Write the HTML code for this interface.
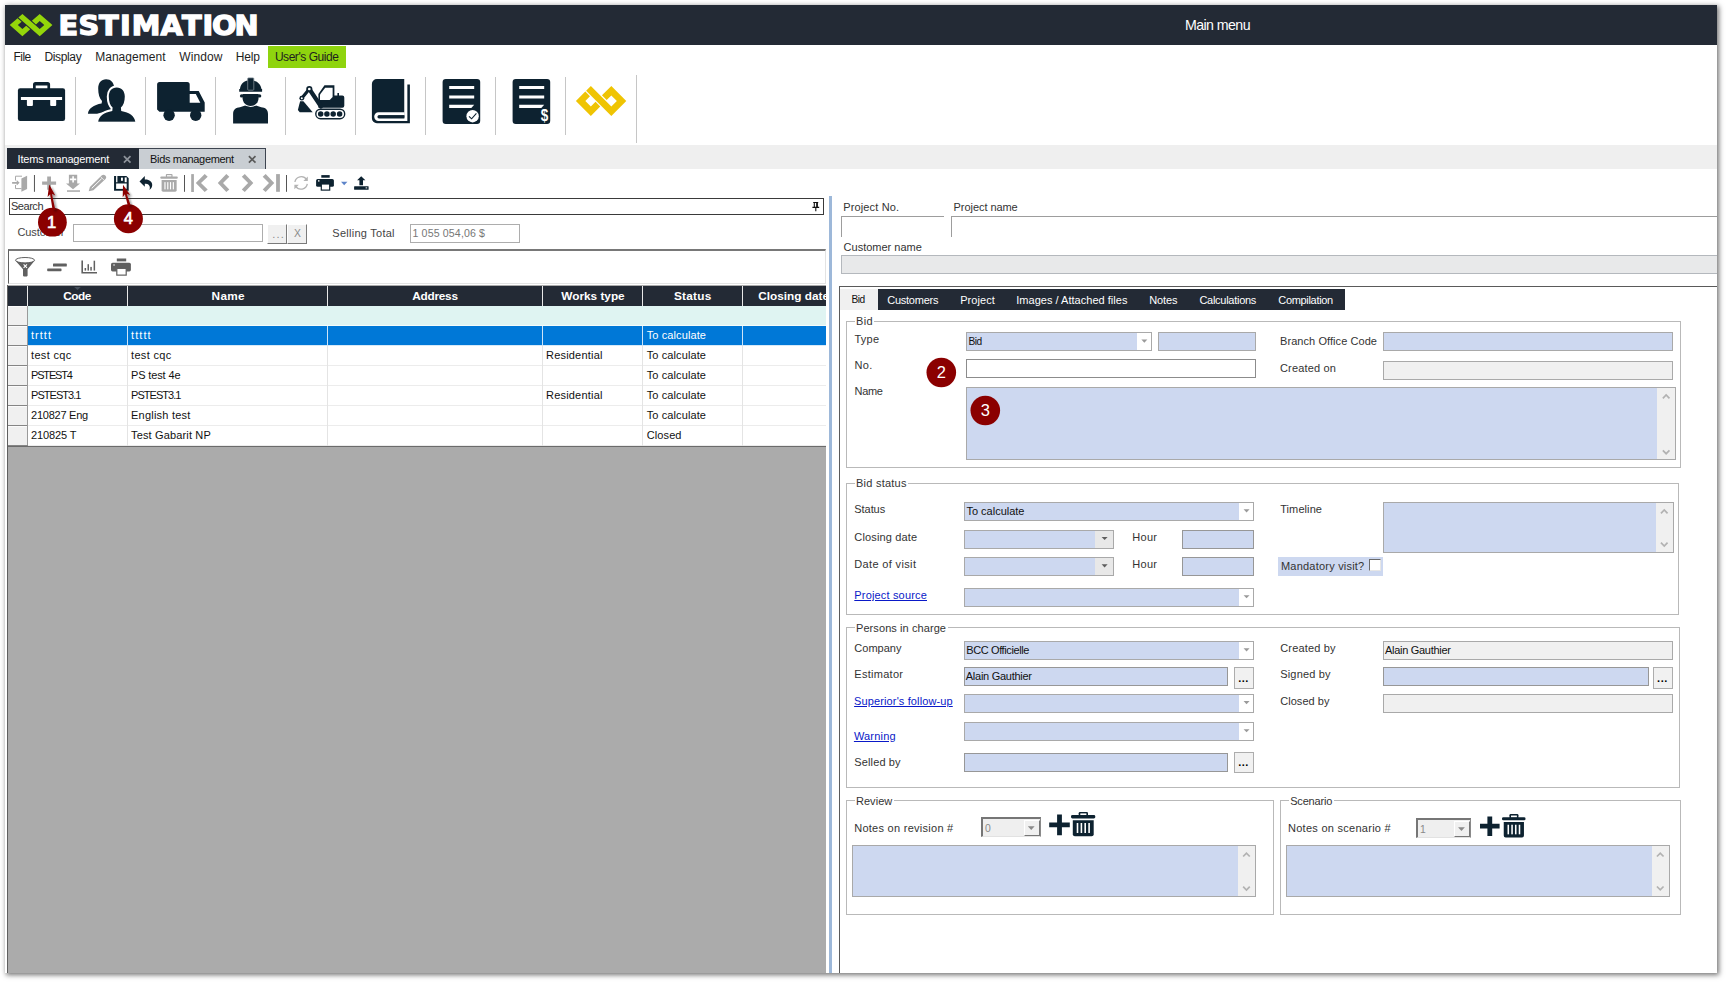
<!DOCTYPE html>
<html lang="en"><head><meta charset="utf-8"><title>Estimation - Bids management</title>
<style>
html,body{margin:0;padding:0;}
body{width:1726px;height:982px;position:relative;overflow:hidden;background:#fff;font-family:"Liberation Sans",sans-serif;}
div{position:absolute;box-sizing:border-box;}
.t{position:absolute;white-space:pre;line-height:1;}
svg{position:absolute;left:0;top:0;}
</style></head><body>
<div style="left:5px;top:5px;width:1712px;height:968px;background:#fff;box-shadow:1.5px 1.5px 5px 0.5px rgba(0,0,0,0.55);"></div>
<div style="left:5px;top:5px;width:1712px;height:40px;background:#232a35;"></div>
<span class="t" style="left:1185px;top:18.28px;font-size:14.2px;color:#fff;letter-spacing:-0.58px;">Main menu</span>
<span class="t" style="left:13.6px;top:50.74px;font-size:12px;color:#1e1e1e;letter-spacing:-0.58px;">File</span>
<span class="t" style="left:44.4px;top:50.74px;font-size:12px;color:#1e1e1e;letter-spacing:-0.34px;">Display</span>
<span class="t" style="left:95.2px;top:50.74px;font-size:12px;color:#1e1e1e;letter-spacing:0.03px;">Management</span>
<span class="t" style="left:179.3px;top:50.74px;font-size:12px;color:#1e1e1e;letter-spacing:0.1px;">Window</span>
<span class="t" style="left:235.7px;top:50.74px;font-size:12px;color:#1e1e1e;letter-spacing:-0.13px;">Help</span>
<div style="left:267.5px;top:46px;width:78.5px;height:22px;background:#8fd40e;"></div>
<span class="t" style="left:274.9px;top:50.74px;font-size:12px;color:#1e1e1e;letter-spacing:-0.46px;">User's Guide</span>
<div style="left:75px;top:77px;width:1px;height:57.5px;background:#c6c6c6;"></div>
<div style="left:144.8px;top:77px;width:1px;height:57.5px;background:#c6c6c6;"></div>
<div style="left:214.7px;top:77px;width:1px;height:57.5px;background:#c6c6c6;"></div>
<div style="left:285px;top:77px;width:1px;height:57.5px;background:#c6c6c6;"></div>
<div style="left:354.8px;top:77px;width:1px;height:57.5px;background:#c6c6c6;"></div>
<div style="left:424.7px;top:77px;width:1px;height:57.5px;background:#c6c6c6;"></div>
<div style="left:494.5px;top:77px;width:1px;height:57.5px;background:#c6c6c6;"></div>
<div style="left:565px;top:77px;width:1px;height:57.5px;background:#c6c6c6;"></div>
<div style="left:636px;top:75px;width:1px;height:67.7px;background:#c6c6c6;"></div>
<div style="left:5px;top:145px;width:1712px;height:24px;background:#efefef;"></div>
<div style="left:7px;top:147.5px;width:132px;height:21.5px;background:#232a35;"></div>
<div style="left:139px;top:147.5px;width:126.5px;height:21.5px;background:#c9ced3;border:1px solid #3d4450;border-bottom:none;border-left:none;"></div>
<span class="t" style="left:17.5px;top:153.89px;font-size:11px;color:#fff;letter-spacing:-0.16px;">Items management</span>
<span class="t" style="left:150px;top:153.89px;font-size:11px;color:#111;letter-spacing:-0.32px;">Bids management</span>
<div style="left:9px;top:198px;width:815px;height:16.5px;background:#fff;border:1px solid #3a3a3a;"></div>
<span class="t" style="left:11px;top:200.99px;font-size:11px;color:#333;letter-spacing:-0.47px;">Search</span>
<span class="t" style="left:17.5px;top:226.99px;font-size:11px;color:#444;letter-spacing:-0.1px;">Customer</span>
<div style="left:73px;top:224.3px;width:190px;height:18.2px;background:#fff;border:1px solid #adadad;"></div>
<div style="left:267.4px;top:224.3px;width:19.2px;height:19.3px;background:#f0f0f0;border-top:1px solid #fff;border-left:1px solid #fff;border-right:1.5px solid #7a7a7a;border-bottom:1.5px solid #7a7a7a;"></div>
<div style="left:287px;top:224.3px;width:19.8px;height:19.3px;background:#f0f0f0;border-top:1px solid #fff;border-left:1px solid #fff;border-right:1.5px solid #7a7a7a;border-bottom:1.5px solid #7a7a7a;"></div>
<span class="t" style="left:272.3px;top:229.09px;font-size:11px;color:#8a8a8a;letter-spacing:1.2px;">...</span>
<span class="t" style="left:293.9px;top:229.2px;font-size:10.4px;color:#8a8a8a;">X</span>
<span class="t" style="left:332.3px;top:227.99px;font-size:11px;color:#444;letter-spacing:0.26px;">Selling Total</span>
<div style="left:410px;top:224.3px;width:109.7px;height:18.7px;background:#fff;border:1px solid #adadad;"></div>
<span class="t" style="left:412.5px;top:228.23px;font-size:10.6px;color:#777;letter-spacing:0.14px;">1 055 054,06 $</span>
<div style="left:8px;top:249px;width:818px;height:35px;background:#fff;border-top:2px solid #787878;border-left:1px solid #5f5f5f;border-right:1px solid #e3e3e3;border-bottom:1px solid #e3e3e3;"></div>
<div style="left:7px;top:285px;width:819px;height:688px;background:#ababab;border-left:1px solid #5f5f5f;"></div>
<div style="left:8px;top:285.5px;width:818px;height:20.2px;background:#232a35;"></div>
<div style="left:27px;top:285.5px;width:1px;height:20.2px;background:#e8e8e8;"></div>
<div style="left:127px;top:285.5px;width:1px;height:20.2px;background:#e8e8e8;"></div>
<div style="left:327px;top:285.5px;width:1px;height:20.2px;background:#e8e8e8;"></div>
<div style="left:542px;top:285.5px;width:1px;height:20.2px;background:#e8e8e8;"></div>
<div style="left:642px;top:285.5px;width:1px;height:20.2px;background:#e8e8e8;"></div>
<div style="left:742px;top:285.5px;width:1px;height:20.2px;background:#e8e8e8;"></div>
<span class="t" style="left:63.2px;top:291.01px;font-size:11.8px;color:#fff;font-weight:bold;letter-spacing:-0.43px;">Code</span>
<span class="t" style="left:211.6px;top:291.01px;font-size:11.8px;color:#fff;font-weight:bold;letter-spacing:0.29px;">Name</span>
<span class="t" style="left:412.2px;top:291.01px;font-size:11.8px;color:#fff;font-weight:bold;letter-spacing:-0.24px;">Address</span>
<span class="t" style="left:561.3px;top:291.01px;font-size:11.8px;color:#fff;font-weight:bold;">Works type</span>
<span class="t" style="left:673.9px;top:291.01px;font-size:11.8px;color:#fff;font-weight:bold;letter-spacing:0.25px;">Status</span>
<span class="t" style="left:758.2px;top:291.01px;font-size:11.8px;color:#fff;font-weight:bold;">Closing date</span>
<div style="left:826px;top:285px;width:3px;height:25px;background:#fff;"></div>
<div style="left:8px;top:305.7px;width:818px;height:19.8px;background:#dff4f2;"></div>
<div style="left:27.5px;top:324.5px;width:798.5px;height:1px;background:#f4fbfa;"></div>
<div style="left:27.5px;top:325.5px;width:798.5px;height:20px;background:#0078d7;"></div>
<span class="t" style="left:31px;top:330.19px;font-size:11px;color:#fff;letter-spacing:1.03px;">trttt</span>
<span class="t" style="left:131px;top:330.19px;font-size:11px;color:#fff;letter-spacing:1.08px;">ttttt</span>
<span class="t" style="left:646.7px;top:330.19px;font-size:11px;color:#fff;letter-spacing:0.11px;">To calculate</span>
<div style="left:27.5px;top:344.5px;width:798.5px;height:1px;background:#d6e9f8;"></div>
<div style="left:27.5px;top:345.5px;width:798.5px;height:20px;background:#fff;"></div>
<span class="t" style="left:31px;top:350.19px;font-size:11px;color:#111;letter-spacing:0.33px;">test cqc</span>
<span class="t" style="left:131px;top:350.19px;font-size:11px;color:#111;letter-spacing:0.33px;">test cqc</span>
<span class="t" style="left:546px;top:350.19px;font-size:11px;color:#111;letter-spacing:0.2px;">Residential</span>
<span class="t" style="left:646.7px;top:350.19px;font-size:11px;color:#111;letter-spacing:0.11px;">To calculate</span>
<div style="left:27.5px;top:364.5px;width:798.5px;height:1px;background:#ececec;"></div>
<div style="left:27.5px;top:365.5px;width:798.5px;height:20px;background:#fff;"></div>
<span class="t" style="left:31px;top:370.19px;font-size:11px;color:#111;letter-spacing:-1.17px;">PSTEST4</span>
<span class="t" style="left:131px;top:370.19px;font-size:11px;color:#111;letter-spacing:-0.13px;">PS test 4e</span>
<span class="t" style="left:646.7px;top:370.19px;font-size:11px;color:#111;letter-spacing:0.11px;">To calculate</span>
<div style="left:27.5px;top:384.5px;width:798.5px;height:1px;background:#ececec;"></div>
<div style="left:27.5px;top:385.5px;width:798.5px;height:20px;background:#fff;"></div>
<span class="t" style="left:31px;top:390.19px;font-size:11px;color:#111;letter-spacing:-0.95px;">PSTEST3.1</span>
<span class="t" style="left:131px;top:390.19px;font-size:11px;color:#111;letter-spacing:-0.95px;">PSTEST3.1</span>
<span class="t" style="left:546px;top:390.19px;font-size:11px;color:#111;letter-spacing:0.2px;">Residential</span>
<span class="t" style="left:646.7px;top:390.19px;font-size:11px;color:#111;letter-spacing:0.11px;">To calculate</span>
<div style="left:27.5px;top:404.5px;width:798.5px;height:1px;background:#ececec;"></div>
<div style="left:27.5px;top:405.5px;width:798.5px;height:20px;background:#fff;"></div>
<span class="t" style="left:31px;top:410.19px;font-size:11px;color:#111;letter-spacing:-0.24px;">210827 Eng</span>
<span class="t" style="left:131px;top:410.19px;font-size:11px;color:#111;letter-spacing:0.23px;">English test</span>
<span class="t" style="left:646.7px;top:410.19px;font-size:11px;color:#111;letter-spacing:0.11px;">To calculate</span>
<div style="left:27.5px;top:424.5px;width:798.5px;height:1px;background:#ececec;"></div>
<div style="left:27.5px;top:425.5px;width:798.5px;height:20px;background:#fff;"></div>
<span class="t" style="left:31px;top:430.19px;font-size:11px;color:#111;letter-spacing:-0.11px;">210825 T</span>
<span class="t" style="left:131px;top:430.19px;font-size:11px;color:#111;letter-spacing:0.15px;">Test Gabarit NP</span>
<span class="t" style="left:646.7px;top:430.19px;font-size:11px;color:#111;letter-spacing:0.11px;">Closed</span>
<div style="left:27.5px;top:444.5px;width:798.5px;height:1px;background:#ececec;"></div>
<div style="left:8px;top:305.7px;width:19.5px;height:139.8px;background:#f0f0f0;"></div>
<div style="left:8px;top:305.5px;width:18.5px;height:1px;background:#fbfbfb;"></div>
<div style="left:8px;top:324.5px;width:19.5px;height:1px;background:#858585;"></div>
<div style="left:8px;top:325.5px;width:18.5px;height:1px;background:#fbfbfb;"></div>
<div style="left:8px;top:344.5px;width:19.5px;height:1px;background:#858585;"></div>
<div style="left:8px;top:345.5px;width:18.5px;height:1px;background:#fbfbfb;"></div>
<div style="left:8px;top:364.5px;width:19.5px;height:1px;background:#858585;"></div>
<div style="left:8px;top:365.5px;width:18.5px;height:1px;background:#fbfbfb;"></div>
<div style="left:8px;top:384.5px;width:19.5px;height:1px;background:#858585;"></div>
<div style="left:8px;top:385.5px;width:18.5px;height:1px;background:#fbfbfb;"></div>
<div style="left:8px;top:404.5px;width:19.5px;height:1px;background:#858585;"></div>
<div style="left:8px;top:405.5px;width:18.5px;height:1px;background:#fbfbfb;"></div>
<div style="left:8px;top:424.5px;width:19.5px;height:1px;background:#858585;"></div>
<div style="left:8px;top:425.5px;width:18.5px;height:1px;background:#fbfbfb;"></div>
<div style="left:8px;top:444.5px;width:19.5px;height:1px;background:#858585;"></div>
<div style="left:26.5px;top:305.7px;width:1px;height:139.8px;background:#9a9a9a;"></div>
<div style="left:127px;top:325.5px;width:1px;height:120px;background:#e4e4e4;"></div>
<div style="left:327px;top:325.5px;width:1px;height:120px;background:#e4e4e4;"></div>
<div style="left:542px;top:325.5px;width:1px;height:120px;background:#e4e4e4;"></div>
<div style="left:642px;top:325.5px;width:1px;height:120px;background:#e4e4e4;"></div>
<div style="left:742px;top:325.5px;width:1px;height:120px;background:#e4e4e4;"></div>
<div style="left:127px;top:325.5px;width:1px;height:20px;background:#cfe4f7;"></div>
<div style="left:327px;top:325.5px;width:1px;height:20px;background:#cfe4f7;"></div>
<div style="left:542px;top:325.5px;width:1px;height:20px;background:#cfe4f7;"></div>
<div style="left:642px;top:325.5px;width:1px;height:20px;background:#cfe4f7;"></div>
<div style="left:742px;top:325.5px;width:1px;height:20px;background:#cfe4f7;"></div>
<div style="left:8px;top:445.6px;width:818px;height:1.2px;background:#6b6b6b;"></div>
<div style="left:826px;top:196px;width:3px;height:777px;background:#fff;"></div>
<div style="left:829px;top:196px;width:3px;height:777px;background:#9db8d9;"></div>
<span class="t" style="left:843.2px;top:201.89px;font-size:11px;color:#333;letter-spacing:0.15px;">Project No.</span>
<span class="t" style="left:953.6px;top:201.89px;font-size:11px;color:#333;letter-spacing:-0.06px;">Project name</span>
<div style="left:841.3px;top:216.3px;width:102.7px;height:20.7px;border-top:1px solid #9d9d9d;border-left:1px solid #9d9d9d;"></div>
<div style="left:951.3px;top:216.3px;width:765.7px;height:20.7px;border-top:1px solid #9d9d9d;border-left:1px solid #9d9d9d;"></div>
<span class="t" style="left:843.6px;top:242.19px;font-size:11px;color:#333;">Customer name</span>
<div style="left:841.3px;top:255.4px;width:875.7px;height:18.6px;background:#e8e9ea;border:1px solid #b4b8bd;border-right:none;"></div>
<div style="left:839.3px;top:286px;width:877.7px;height:687px;border-top:1.2px solid #5a5a5a;border-left:1.2px solid #5a5a5a;"></div>
<div style="left:840.3px;top:289px;width:37.9px;height:20.7px;background:#f0f0f0;"></div>
<div style="left:878.2px;top:289px;width:466.6px;height:20.7px;background:#232a35;"></div>
<span class="t" style="left:851.6px;top:295.37px;font-size:10.2px;color:#111;letter-spacing:-0.57px;">Bid</span>
<span class="t" style="left:887.3px;top:294.69px;font-size:11px;color:#fff;letter-spacing:-0.26px;">Customers</span>
<span class="t" style="left:960.2px;top:294.69px;font-size:11px;color:#fff;letter-spacing:0.06px;">Project</span>
<span class="t" style="left:1016.3px;top:294.69px;font-size:11px;color:#fff;letter-spacing:0.02px;">Images / Attached files</span>
<span class="t" style="left:1149.2px;top:294.69px;font-size:11px;color:#fff;letter-spacing:-0.11px;">Notes</span>
<span class="t" style="left:1199.4px;top:294.69px;font-size:11px;color:#fff;letter-spacing:-0.27px;">Calculations</span>
<span class="t" style="left:1278.3px;top:294.69px;font-size:11px;color:#fff;letter-spacing:-0.32px;">Compilation</span>
<div style="left:846.3px;top:321.1px;width:834.4px;height:146.6px;border:1px solid #b9b9b9;"></div>
<div style="left:854.5px;top:315.1px;width:19.5px;height:13px;background:#fff;"></div>
<span class="t" style="left:856px;top:316.49px;font-size:11px;color:#333;letter-spacing:0.3px;">Bid</span>
<span class="t" style="left:854.5px;top:334.29px;font-size:11px;color:#333;letter-spacing:0.22px;">Type</span>
<div style="left:966px;top:332.3px;width:185.7px;height:18.9px;background:#cdd8f0;border:1px solid #a9a9a9;"></div>
<div style="left:1137.2px;top:333.3px;width:13.5px;height:16.9px;background:#fff;"></div>
<span class="t" style="left:968.4px;top:336.77px;font-size:10.2px;color:#111;letter-spacing:-0.52px;">Bid</span>
<div style="left:1158px;top:332.3px;width:97.9px;height:18.9px;background:#cdd8f0;border:1px solid #a9a9a9;"></div>
<span class="t" style="left:854.5px;top:359.99px;font-size:11px;color:#333;letter-spacing:0.34px;">No.</span>
<div style="left:966px;top:359.2px;width:289.9px;height:18.4px;background:#fff;border:1px solid #8c8c8c;"></div>
<span class="t" style="left:854.5px;top:385.99px;font-size:11px;color:#333;letter-spacing:-0.31px;">Name</span>
<div style="left:966px;top:387.2px;width:709.9px;height:73.3px;background:#cdd8f0;border:1px solid #a9a9a9;"></div>
<div style="left:1657.4px;top:388.2px;width:17.5px;height:71.3px;background:#f0f0f0;"></div>
<span class="t" style="left:1280px;top:335.69px;font-size:11px;color:#333;letter-spacing:0.07px;">Branch Office Code</span>
<div style="left:1383px;top:332.3px;width:290px;height:18.9px;background:#cdd8f0;border:1px solid #a9a9a9;"></div>
<span class="t" style="left:1280px;top:363.19px;font-size:11px;color:#333;letter-spacing:0.16px;">Created on</span>
<div style="left:1383px;top:361.2px;width:290px;height:18.5px;background:#f0f0f0;border:1px solid #a9a9a9;"></div>
<div style="left:846.3px;top:482.8px;width:832.6px;height:131.8px;border:1px solid #b9b9b9;"></div>
<div style="left:854.5px;top:476.8px;width:53.5px;height:13px;background:#fff;"></div>
<span class="t" style="left:856px;top:478.19px;font-size:11px;color:#333;letter-spacing:0.24px;">Bid status</span>
<span class="t" style="left:854.3px;top:503.69px;font-size:11px;color:#333;letter-spacing:-0.06px;">Status</span>
<div style="left:963.8px;top:502.2px;width:290.1px;height:18.6px;background:#cdd8f0;border:1px solid #a9a9a9;"></div>
<div style="left:1239.4px;top:503.2px;width:13.5px;height:16.6px;background:#fff;"></div>
<span class="t" style="left:966.4px;top:505.89px;font-size:11px;color:#111;">To calculate</span>
<span class="t" style="left:854.3px;top:531.69px;font-size:11px;color:#333;letter-spacing:0.16px;">Closing date</span>
<div style="left:963.8px;top:529.7px;width:150.4px;height:19px;background:#cdd8f0;border:1px solid #a9a9a9;"></div>
<div style="left:1095.2px;top:530.7px;width:18px;height:17px;background:#e8e8e8;"></div>
<span class="t" style="left:1132.2px;top:531.89px;font-size:11px;color:#333;letter-spacing:0.32px;">Hour</span>
<div style="left:1181.8px;top:529.7px;width:72.1px;height:19px;background:#cdd8f0;border:1px solid #979797;"></div>
<span class="t" style="left:854.3px;top:558.69px;font-size:11px;color:#333;letter-spacing:0.35px;">Date of visit</span>
<div style="left:963.8px;top:557px;width:150.4px;height:19px;background:#cdd8f0;border:1px solid #a9a9a9;"></div>
<div style="left:1095.2px;top:558px;width:18px;height:17px;background:#e8e8e8;"></div>
<span class="t" style="left:1132.2px;top:558.89px;font-size:11px;color:#333;letter-spacing:0.32px;">Hour</span>
<div style="left:1181.8px;top:557px;width:72.1px;height:19px;background:#cdd8f0;border:1px solid #979797;"></div>
<span class="t" style="left:854.3px;top:590.19px;font-size:11px;color:#0a19c8;letter-spacing:0.17px;text-decoration:underline;">Project source</span>
<div style="left:963.8px;top:588px;width:290.1px;height:18.9px;background:#cdd8f0;border:1px solid #a9a9a9;"></div>
<div style="left:1239.4px;top:589px;width:13.5px;height:16.9px;background:#fff;"></div>
<span class="t" style="left:1280.2px;top:503.69px;font-size:11px;color:#333;letter-spacing:0.09px;">Timeline</span>
<div style="left:1383px;top:502.2px;width:291px;height:50.6px;background:#cdd8f0;border:1px solid #a9a9a9;"></div>
<div style="left:1655.5px;top:503.2px;width:17.5px;height:48.6px;background:#f0f0f0;"></div>
<div style="left:1277.8px;top:556.7px;width:105.2px;height:19.2px;background:#cdd8f0;"></div>
<span class="t" style="left:1281px;top:560.69px;font-size:11px;color:#333;letter-spacing:0.21px;">Mandatory visit?</span>
<div style="left:1369.2px;top:559px;width:11.8px;height:11.9px;background:#fff;border-top:1.5px solid #6a6a6a;border-left:1.5px solid #6a6a6a;border-right:1px solid #e6e6e6;border-bottom:1px solid #e6e6e6;"></div>
<div style="left:846.3px;top:627.3px;width:833.6px;height:160.6px;border:1px solid #b9b9b9;"></div>
<div style="left:854.5px;top:621.3px;width:93px;height:13px;background:#fff;"></div>
<span class="t" style="left:856px;top:622.69px;font-size:11px;color:#333;letter-spacing:0.08px;">Persons in charge</span>
<span class="t" style="left:854.3px;top:642.99px;font-size:11px;color:#333;letter-spacing:0.02px;">Company</span>
<div style="left:963.8px;top:641px;width:290.1px;height:19px;background:#cdd8f0;border:1px solid #a9a9a9;"></div>
<div style="left:1239.4px;top:642px;width:13.5px;height:17px;background:#fff;"></div>
<span class="t" style="left:966.3px;top:644.69px;font-size:11px;color:#111;letter-spacing:-0.4px;">BCC Officielle</span>
<span class="t" style="left:854.3px;top:668.79px;font-size:11px;color:#333;letter-spacing:0.28px;">Estimator</span>
<div style="left:963.8px;top:667.2px;width:264.4px;height:18.6px;background:#cdd8f0;border:1px solid #979797;"></div>
<span class="t" style="left:965.8px;top:670.89px;font-size:11px;color:#111;letter-spacing:-0.27px;">Alain Gauthier</span>
<div style="left:1234px;top:667.2px;width:20px;height:21.7px;background:#f1f1f1;border:1px solid #adadad;"></div>
<span class="t" style="left:1238.2px;top:672.59px;font-size:11px;color:#000;font-weight:bold;letter-spacing:0.5px;">...</span>
<span class="t" style="left:854.1px;top:695.69px;font-size:11px;color:#0a19c8;letter-spacing:0.12px;text-decoration:underline;">Superior's follow-up</span>
<div style="left:963.8px;top:694px;width:290.1px;height:18.7px;background:#cdd8f0;border:1px solid #a9a9a9;"></div>
<div style="left:1239.4px;top:695px;width:13.5px;height:16.7px;background:#fff;"></div>
<span class="t" style="left:853.9px;top:730.59px;font-size:11px;color:#0a19c8;letter-spacing:0.19px;text-decoration:underline;">Warning</span>
<div style="left:963.8px;top:722px;width:290.1px;height:18.9px;background:#cdd8f0;border:1px solid #a9a9a9;"></div>
<div style="left:1239.4px;top:723px;width:13.5px;height:16.9px;background:#fff;"></div>
<span class="t" style="left:854.3px;top:757.29px;font-size:11px;color:#333;letter-spacing:0.13px;">Selled by</span>
<div style="left:963.8px;top:753.3px;width:264.4px;height:18.5px;background:#cdd8f0;border:1px solid #979797;"></div>
<div style="left:1234px;top:752.3px;width:20px;height:20.9px;background:#f1f1f1;border:1px solid #adadad;"></div>
<span class="t" style="left:1238.2px;top:756.89px;font-size:11px;color:#000;font-weight:bold;letter-spacing:0.5px;">...</span>
<span class="t" style="left:1280.2px;top:642.99px;font-size:11px;color:#333;letter-spacing:0.18px;">Created by</span>
<div style="left:1383px;top:641px;width:290.2px;height:19px;background:#f0f0f0;border:1px solid #a9a9a9;"></div>
<span class="t" style="left:1385px;top:644.69px;font-size:11px;color:#111;letter-spacing:-0.29px;">Alain Gauthier</span>
<span class="t" style="left:1280.2px;top:668.79px;font-size:11px;color:#333;letter-spacing:0.18px;">Signed by</span>
<div style="left:1383px;top:667.2px;width:266.2px;height:18.6px;background:#cdd8f0;border:1px solid #979797;"></div>
<div style="left:1653px;top:667.2px;width:19.8px;height:21.7px;background:#f1f1f1;border:1px solid #adadad;"></div>
<span class="t" style="left:1657.1px;top:672.59px;font-size:11px;color:#000;font-weight:bold;letter-spacing:0.5px;">...</span>
<span class="t" style="left:1280.2px;top:695.89px;font-size:11px;color:#333;letter-spacing:0.05px;">Closed by</span>
<div style="left:1383px;top:694px;width:290.2px;height:18.7px;background:#f0f0f0;border:1px solid #a9a9a9;"></div>
<div style="left:846.3px;top:800.4px;width:427.5px;height:114.5px;border:1px solid #b9b9b9;"></div>
<div style="left:854.5px;top:794.4px;width:39.2px;height:13px;background:#fff;"></div>
<span class="t" style="left:856px;top:795.79px;font-size:11px;color:#333;letter-spacing:0.03px;">Review</span>
<span class="t" style="left:854.2px;top:822.69px;font-size:11px;color:#333;letter-spacing:0.27px;">Notes on revision #</span>
<div style="left:981px;top:817.3px;width:59.5px;height:19.3px;background:#efefef;border-top:2px solid #767676;border-left:2px solid #767676;border-right:1px solid #8a8a8a;border-bottom:1px solid #e2e2e2;"></div>
<div style="left:1023.5px;top:819.8px;width:16px;height:16.3px;background:#f0f0f0;border-top:1px solid #fff;border-left:1px solid #fff;border-right:1px solid #777;border-bottom:1.6px solid #777;"></div>
<span class="t" style="left:985px;top:824px;font-size:10.4px;color:#8a8a8a;">0</span>
<div style="left:852.2px;top:845.3px;width:404px;height:51.5px;background:#cdd8f0;border:1px solid #a9a9a9;"></div>
<div style="left:1237.7px;top:846.3px;width:17.5px;height:49.5px;background:#f0f0f0;"></div>
<div style="left:1280.2px;top:800.4px;width:400.6px;height:114.4px;border:1px solid #b9b9b9;"></div>
<div style="left:1288.7px;top:794.4px;width:45.1px;height:13px;background:#fff;"></div>
<span class="t" style="left:1290.2px;top:795.79px;font-size:11px;color:#333;letter-spacing:-0.19px;">Scenario</span>
<span class="t" style="left:1288px;top:823.29px;font-size:11px;color:#333;letter-spacing:0.27px;">Notes on scenario #</span>
<div style="left:1416px;top:818.3px;width:54.7px;height:19.3px;background:#efefef;border-top:2px solid #767676;border-left:2px solid #767676;border-right:1px solid #8a8a8a;border-bottom:1px solid #e2e2e2;"></div>
<div style="left:1453.7px;top:820.8px;width:16px;height:16.3px;background:#f0f0f0;border-top:1px solid #fff;border-left:1px solid #fff;border-right:1px solid #777;border-bottom:1.6px solid #777;"></div>
<span class="t" style="left:1420px;top:825px;font-size:10.4px;color:#8a8a8a;">1</span>
<div style="left:1286.2px;top:845.3px;width:383.8px;height:51.4px;background:#cdd8f0;border:1px solid #a9a9a9;"></div>
<div style="left:1651.5px;top:846.3px;width:17.5px;height:49.4px;background:#f0f0f0;"></div>
<svg width="1726" height="982" viewBox="0 0 1726 982" font-family="Liberation Sans, sans-serif">
<path d="M9.72 25.1 L22.42 36.2 L30.24 29.36 L26.19 25.82 L22.42 29.12 L17.82 25.1 L21.59 21.8 L17.54 18.26 Z" fill="#94d60a"/>
<path d="M22.42 14 L18.37 17.54 L39.72 36.2 L52.42 25.1 L39.72 14 L31.89 20.84 L35.95 24.38 L39.72 21.08 L44.31 25.1 L39.72 29.12 Z" fill="#94d60a"/>
<text transform="scale(1.07 1)" x="54.78 73.29 92.57 112.07 123.09 150.12 170.14 189.36 198.07 219.22" y="34.9" font-size="26.89" font-weight="bold" fill="#fff" font-family="DejaVu Sans, Liberation Sans, sans-serif" stroke="#fff" stroke-width="1.3" stroke-linejoin="miter">ESTIMATION</text>
<path d="M123.9 156.1 L130.5 162.7 M130.5 156.1 L123.9 162.7" stroke="#8e939b" stroke-width="1.7" fill="none"/>
<path d="M248.9 156.1 L255.5 162.7 M255.5 156.1 L248.9 162.7" stroke="#5a5a5a" stroke-width="1.7" fill="none"/>
<path d="M813.2 202.5 H818.2 M814.3 202.5 V207.2 M817.3 202.5 V207.2 M812.4 207.4 H819.2 M815.8 207.4 V211.2" stroke="#111" stroke-width="1.1" fill="none"/>
<rect x="816.2" y="202.6" width="1.2" height="4.6" fill="#111"/>
<path d="M74.2 287 H80.8 L77.5 290 Z" fill="#46505c"/>
<path d="M1141.35 339.45 H1147.35 L1144.35 342.65 Z" fill="#9a9a9a"/>
<path d="M1662.85 398.4 L1666.15 395 L1669.45 398.4" fill="none" stroke="#b2b2b2" stroke-width="1.7"/>
<path d="M1662.85 450.3 L1666.15 453.7 L1669.45 450.3" fill="none" stroke="#b2b2b2" stroke-width="1.7"/>
<path d="M1243.55 509.2 H1249.55 L1246.55 512.4 Z" fill="#9a9a9a"/>
<path d="M1101.6 536.9 H1107.6 L1104.6 540.1 Z" fill="#5e5e5e"/>
<path d="M1101.6 564.2 H1107.6 L1104.6 567.4 Z" fill="#5e5e5e"/>
<path d="M1243.55 595.15 H1249.55 L1246.55 598.35 Z" fill="#9a9a9a"/>
<path d="M1660.95 513.4 L1664.25 510 L1667.55 513.4" fill="none" stroke="#b2b2b2" stroke-width="1.7"/>
<path d="M1660.95 542.6 L1664.25 546 L1667.55 542.6" fill="none" stroke="#b2b2b2" stroke-width="1.7"/>
<path d="M1243.55 648.2 H1249.55 L1246.55 651.4 Z" fill="#9a9a9a"/>
<path d="M1243.55 701.05 H1249.55 L1246.55 704.25 Z" fill="#9a9a9a"/>
<path d="M1243.55 729.15 H1249.55 L1246.55 732.35 Z" fill="#9a9a9a"/>
<path d="M1027.85 826.15 H1034.65 L1031.25 830.05 Z" fill="#8a8a8a"/>
<path d="M1057.1 814.6 H1061.9 V822.5 H1069.8 V827.3 H1061.9 V835.2 H1057.1 V827.3 H1049.2 V822.5 H1057.1 Z" fill="#0d2230"/>
<rect x="1078.7" y="811.9" width="9.3" height="4.5" rx="1.3" fill="#0d2230"/>
<rect x="1080.3" y="813.4" width="6.1" height="2.2" fill="#fff"/>
<rect x="1071" y="815.1" width="24.3" height="3.3" rx="1.4" fill="#0d2230"/>
<path d="M1072.8 820.2 H1093.7 V834.2 a2 2 0 0 1 -2 2 H1074.8 a2 2 0 0 1 -2 -2 Z" fill="#0d2230"/>
<rect x="1076.7" y="823" width="1.6" height="10" fill="#fff"/>
<rect x="1080.6" y="823" width="1.6" height="10" fill="#fff"/>
<rect x="1084.4" y="823" width="1.6" height="10" fill="#fff"/>
<rect x="1088.3" y="823" width="1.6" height="10" fill="#fff"/>
<path d="M1243.15 856.5 L1246.45 853.1 L1249.75 856.5" fill="none" stroke="#b2b2b2" stroke-width="1.7"/>
<path d="M1243.15 886.6 L1246.45 890 L1249.75 886.6" fill="none" stroke="#b2b2b2" stroke-width="1.7"/>
<path d="M1458.05 827.15 H1464.85 L1461.45 831.05 Z" fill="#8a8a8a"/>
<path d="M1487.4 816.4 H1492.2 V823.75 H1499.6 V828.55 H1492.2 V835.9 H1487.4 V828.55 H1480 V823.75 H1487.4 Z" fill="#0d2230"/>
<rect x="1509.45" y="814.1" width="8.99" height="4.31" rx="1.26" fill="#0d2230"/>
<rect x="1510.99" y="815.54" width="5.9" height="2.11" fill="#fff"/>
<rect x="1502" y="817.17" width="23.5" height="3.16" rx="1.35" fill="#0d2230"/>
<path d="M1503.74 822.06 H1523.95 V835.48 a1.93 1.92 0 0 1 -1.93 1.92 H1505.67 a1.93 1.92 0 0 1 -1.93 -1.92 Z" fill="#0d2230"/>
<rect x="1507.51" y="824.74" width="1.55" height="9.59" fill="#fff"/>
<rect x="1511.28" y="824.74" width="1.55" height="9.59" fill="#fff"/>
<rect x="1514.96" y="824.74" width="1.55" height="9.59" fill="#fff"/>
<rect x="1518.73" y="824.74" width="1.55" height="9.59" fill="#fff"/>
<path d="M1656.95 856.5 L1660.25 853.1 L1663.55 856.5" fill="none" stroke="#b2b2b2" stroke-width="1.7"/>
<path d="M1656.95 886.5 L1660.25 889.9 L1663.55 886.5" fill="none" stroke="#b2b2b2" stroke-width="1.7"/>
<g fill="#0d2230">
<rect x="17.9" y="88.2" width="47.2" height="32.7" rx="2.2"/>
<path d="M33 89 V84.6 a2.5 2.5 0 0 1 2.5 -2.5 h12.1 a2.5 2.5 0 0 1 2.5 2.5 V89 h-2.7 V85.4 h-11.7 V89 Z"/>
</g>
<path d="M20.9 97.1 H62.1 V100.1 H56.2 V104.9 a1 1 0 0 1 -1 1 H51.2 a1 1 0 0 1 -1 -1 V100.1 H32.9 V104.9 a1 1 0 0 1 -1 1 H27.9 a1 1 0 0 1 -1 -1 V100.1 H20.9 Z" fill="#fff"/>
<g fill="#0d2230">
<path d="M106.1 79.3 C111 79.3 113.6 82.6 114 86.5 C114.3 91 113.6 96 111.5 99.5 L110.5 103 L113 109.5 L97 113.7 H87.9 C88.6 108.5 93.5 105 101.6 103.6 L102 101 C99.5 98.5 98.2 94 98.2 88.5 C98.2 83 101.2 79.3 106.1 79.3 Z"/>
</g>
<g fill="#0d2230" stroke="#fff" stroke-width="4" stroke-linejoin="round" paint-order="stroke">
<path d="M116.7 87.4 C121.8 87.4 124.8 91.2 124.8 96.4 C124.8 101.5 123.3 105.4 120.9 107.6 L121.2 111 C129.5 112.6 134.6 116 135.3 121.85 H98.2 C98.9 116 104 112.6 112.3 111 L112.6 107.6 C110.2 105.4 108.8 101.5 108.8 96.4 C108.8 91.2 111.7 87.4 116.7 87.4 Z"/>
</g>
<rect x="96" y="121.9" width="42" height="3" fill="#fff"/>
<g fill="#0d2230">
<path d="M159.6 82.1 H187.2 a2.5 2.5 0 0 1 2.5 2.5 V91 H198.7 L204.7 102.4 V111.7 H159.4 L157.1 109.4 V84.6 a2.5 2.5 0 0 1 2.5 -2.5 Z"/>
<circle cx="169.1" cy="115.3" r="5.7"/><circle cx="195.7" cy="115.3" r="5.7"/>
</g>
<path d="M189.7 93.9 H195.8 L200.3 102.8 H189.7 Z" fill="#fff"/>
<g fill="#0d2230">
<path d="M240 89 C240.6 83.6 244.5 80.3 250.6 80.3 C256.7 80.3 260.6 83.6 261.5 89 H262.1 V91.85 H239.2 V89 Z"/>
<rect x="247.7" y="77.9" width="6.1" height="12.3" rx="0.8" stroke="#7d8a93" stroke-width="0.8"/>
<path d="M233.1 123.5 V114 C233.1 109.5 236 107.6 240 107.3 L245.2 105.6 H256 L261.2 107.3 C265.2 107.6 268 109.5 268 114 V123.5 Z"/>
</g>
<g fill="#0d2230" stroke="#fff" stroke-width="2" paint-order="stroke">
<path d="M242.5 93.9 H258.7 V97 C258.7 102.5 255.5 106 250.6 106 C245.7 106 242.5 102.5 242.5 97 Z"/>
</g>
<g fill="#0d2230">
<circle cx="241.6" cy="95.9" r="1.7"/><circle cx="259.6" cy="95.9" r="1.7"/>
</g>
<g fill="#0d2230">
<rect x="315.1" y="108.5" width="30.3" height="10.9" rx="5.45"/>
</g>
<rect x="316.5" y="109.9" width="27.5" height="8.1" rx="4.05" fill="#fff"/>
<circle cx="320.7" cy="114" r="2.75" fill="#0d2230"/>
<circle cx="326.9" cy="114" r="2.75" fill="#0d2230"/>
<circle cx="333.2" cy="114" r="2.75" fill="#0d2230"/>
<circle cx="339.6" cy="114" r="2.75" fill="#0d2230"/>
<g fill="#0d2230">
<path d="M318.4 107.7 V94 L324.5 85.35 H334.4 V95.5 H337.4 V93 H339 V95.5 H342.3 a2 2 0 0 1 2 2 V105.7 a2 2 0 0 1 -2 2 Z"/>
<path d="M309.3 89 L301.76 98.2" stroke="#0d2230" stroke-width="3.2" stroke-linecap="round"/>
<path d="M309.3 89 L321 106.5" stroke="#0d2230" stroke-width="4.2" stroke-linecap="round"/>
<circle cx="309.3" cy="89" r="3.1"/><circle cx="301.8" cy="98.2" r="2.4"/>
<path d="M300.1 101.2 H303.4 L312.7 112.3 H299.7 L297.9 110.1 Z"/>
</g>
<circle cx="309.3" cy="89" r="1.35" fill="#fff"/><circle cx="301.8" cy="98.2" r="1" fill="#fff"/>
<path d="M325.2 87.8 H332.6 V97.1 L329.7 99.95 H320 V94.6 Z" fill="#fff"/>
<g fill="#0d2230">
<path d="M376.9 79 H404.5 V121 H407.2 V84.5 H409.9 V123.3 H376.9 a5 5 0 0 1 -5 -5 V84 a5 5 0 0 1 5 -5 Z"/>
</g>
<path d="M404.5 112.3 H378.5 a4.3 4.3 0 0 0 0 8.6 H407.2 V118.4 H379 a1.6 1.6 0 0 1 0 -3.2 H404.5 Z" fill="#fff"/>
<rect x="404.5" y="79" width="2.7" height="39.5" fill="#fff"/>
<path d="M404.5 115.2 H379.3 a1.3 1.3 0 0 0 0 2.6 H404.5 Z" fill="#0d2230"/>
<rect x="442.6" y="78.9" width="37.6" height="45" rx="3.2" fill="#0d2230"/>
<rect x="449.2" y="86" width="25" height="3" fill="#fff"/>
<rect x="449.2" y="95.5" width="25" height="3" fill="#fff"/>
<path d="M449.2 104.8 H474.2 L471.3 107.9 H449.2 Z" fill="#fff"/>
<circle cx="472.6" cy="116.2" r="6.2" fill="#fff"/>
<path d="M469 116.3 L471.6 118.8 L476.4 113.3" fill="none" stroke="#0d2230" stroke-width="1.1"/>
<rect x="512.6" y="78.9" width="37.6" height="45" rx="3.2" fill="#0d2230"/>
<rect x="519.2" y="86" width="25" height="3" fill="#fff"/>
<rect x="519.2" y="95.5" width="25" height="3" fill="#fff"/>
<path d="M519.2 104.8 H544.2 L541.3 107.9 H519.2 Z" fill="#fff"/>
<text x="544.5" y="120.6" font-size="15" font-weight="bold" fill="#fff" text-anchor="middle" transform="translate(544.5 0) scale(0.9 1.08) translate(-544.5 -8.6)">$</text>
<path d="M575.9 100.95 L590.85 116 L600.23 106.56 L595.52 101.82 L590.85 106.52 L585.32 100.95 L589.99 96.25 L585.28 91.51 Z" fill="#efc403"/>
<path d="M590.85 85.9 L586.14 90.64 L611.33 116 L626.28 100.95 L611.33 85.9 L601.95 95.34 L606.66 100.08 L611.33 95.38 L616.86 100.95 L611.33 106.52 Z" fill="#efc403"/>
<path d="M22 176.2 H15.5 V180.5 M15.5 185 V188.6 H21.5" fill="none" stroke="#a9a9a9" stroke-width="1"/>
<path d="M21.4 178.4 L27.1 175.7 V189 L21.4 191.7 Z" fill="#a9a9a9"/>
<path d="M12.1 181.9 H16.7 V180 L19.6 182.8 L16.7 185.6 V183.7 H12.1 Z" fill="#a9a9a9"/>
<rect x="33.95" y="175" width="1" height="16.8" fill="#555"/>
<rect x="184" y="175" width="1" height="16.8" fill="#555"/>
<rect x="286" y="175" width="1" height="16.8" fill="#555"/>
<path d="M47.2 176.4 H51 V181.5 H56.1 V184.8 H51 V189.8 H47.2 V184.8 H42.1 V181.5 H47.2 Z" fill="#a9a9a9"/>
<path d="M68.9 174.8 H77.2 V183.4 H80 L73 189.2 L66 183.4 H68.9 Z" fill="#a9a9a9"/>
<path d="M72.3 176.2 H73.9 V178.6 H76.3 V180.2 H73.9 V182.6 H72.3 V180.2 H69.9 V178.6 H72.3 Z" fill="#fff"/>
<rect x="67" y="190.3" width="13" height="1.5" fill="#a9a9a9"/>
<path d="M88.7 191.3 L89.9 186.9 L101.6 175.6 a2.6 2.6 0 0 1 3.7 0 a2.6 2.6 0 0 1 0 3.7 L93.4 190.2 Z" fill="#a9a9a9"/>
<path d="M91.7 188.4 L101.6 178.7" stroke="#fff" stroke-width="1" fill="none"/>
<path d="M100.5 176.6 L104.2 180.3" stroke="#fff" stroke-width="0.7" fill="none"/>
<path d="M114.05 176.05 H126.4 L128.7 178.3 V190.7 H114.05 Z" fill="#0d2230"/>
<rect x="116.1" y="183.5" width="10.6" height="5.4" fill="#fff"/>
<rect x="116.1" y="176.05" width="1.3" height="6.2" fill="#fff"/>
<rect x="124.7" y="177.4" width="2" height="4.8" fill="#fff"/>
<rect x="121" y="177.6" width="1.9" height="3.2" fill="#fff"/>
<path d="M139.5 181.5 L144.8 176 V179.4 C149.5 179.2 152.4 181.8 152.2 185.2 C152.1 187.2 151 188.9 149.4 189.9 C150.2 188 150 185.9 148.8 184.9 C147.8 184 146.5 183.8 144.8 183.8 V186.8 Z" fill="#0d2230"/>
<rect x="165.85" y="174.1" width="6.7" height="3.26" rx="0.94" fill="#a9a9a9"/>
<rect x="167" y="175.19" width="4.39" height="1.59" fill="#fff"/>
<rect x="160.3" y="176.42" width="17.5" height="2.39" rx="1.01" fill="#a9a9a9"/>
<path d="M161.6 180.11 H176.65 V190.25 a1.44 1.45 0 0 1 -1.44 1.45 H163.04 a1.44 1.45 0 0 1 -1.44 -1.45 Z" fill="#a9a9a9"/>
<rect x="164.4" y="182.14" width="1.15" height="7.24" fill="#fff"/>
<rect x="167.21" y="182.14" width="1.15" height="7.24" fill="#fff"/>
<rect x="169.95" y="182.14" width="1.15" height="7.24" fill="#fff"/>
<rect x="172.76" y="182.14" width="1.15" height="7.24" fill="#fff"/>
<rect x="191.2" y="174.1" width="2.7" height="17.9" fill="#a9a9a9"/>
<path d="M195.8 183.1 L204.7 174.1 L207.7 176.7 L201 183.1 L207.7 189.4 L204.7 192 Z" fill="#a9a9a9"/>
<path d="M217.8 183.1 L226.3 174.1 L229.3 176.7 L223 183.1 L229.3 189.4 L226.3 192 Z" fill="#a9a9a9"/>
<path d="M253.3 183.1 L244.8 174.1 L241.8 176.7 L248.1 183.1 L241.8 189.4 L244.8 192 Z" fill="#a9a9a9"/>
<path d="M274.2 183.1 L265.7 174.1 L262.7 176.7 L269 183.1 L262.7 189.4 L265.7 192 Z" fill="#a9a9a9"/>
<rect x="276.1" y="174.1" width="3.8" height="17.7" fill="#a9a9a9"/>
<g fill="none" stroke="#b3b3b3" stroke-width="1.3">
<path d="M294.9 182 A6.4 6.4 0 0 1 306.6 179.6"/>
<path d="M307.3 183.8 A6.4 6.4 0 0 1 295.6 186.2"/>
</g>
<path d="M307.8 176.6 V181 H303.4 Z" fill="#b3b3b3"/>
<path d="M294.4 189.2 V184.8 H298.8 Z" fill="#b3b3b3"/>
<rect x="321.3" y="175.1" width="8.4" height="2.6" fill="#0d2230"/>
<rect x="316.1" y="178.9" width="17.8" height="7.9" rx="1.6" fill="#0d2230"/>
<rect x="321.3" y="184" width="8.4" height="6.1" fill="#fff" stroke="#0d2230" stroke-width="1.2"/>
<circle cx="318.8" cy="180.9" r="0.8" fill="#fff"/>
<path d="M341 181.8 H347.4 L344.2 185.3 Z" fill="#5d84c9"/>
<path d="M361.2 176.3 L365.4 180.2 H363 V185.3 H359.4 V180.2 H357.1 Z" fill="#0d2230"/>
<rect x="354.1" y="186.3" width="14.5" height="3.5" rx="0.5" fill="#0d2230"/>
<rect x="365.6" y="187.4" width="1.6" height="1" fill="#fff"/>
<path d="M15.3 260.6 L23 269.3 V275.6 a0.8 0.8 0 0 0 0.8 0.8 H26.8 a0.8 0.8 0 0 0 0.8 -0.8 V269.3 L34.8 260.6 Z" fill="#606060"/>
<ellipse cx="25.05" cy="260.2" rx="9.5" ry="2.7" fill="#fff" stroke="#606060" stroke-width="1"/>
<path d="M23.6 264.3 L27 267.9 M27 264.3 L23.6 267.9" stroke="#fff" stroke-width="1.1" fill="none"/>
<rect x="53" y="263.6" width="13.8" height="3" rx="0.6" fill="#606060"/>
<rect x="47.2" y="268.4" width="14.3" height="2.8" rx="0.6" fill="#606060"/>
<path d="M81.4 260.5 H83 V272 H97 V273.5 H81.4 Z" fill="#606060"/>
<rect x="84.6" y="268" width="1.5" height="2.6" fill="#606060"/>
<rect x="87.5" y="264.2" width="1.5" height="6.4" fill="#606060"/>
<rect x="90.3" y="266.9" width="1.5" height="3.7" fill="#606060"/>
<rect x="93.6" y="260.7" width="1.5" height="9.9" fill="#606060"/>
<rect x="116.81" y="258.5" width="9.39" height="2.88" fill="#606060"/>
<rect x="111" y="262.71" width="19.9" height="8.76" rx="1.6" fill="#606060"/>
<rect x="116.81" y="268.37" width="9.39" height="6.76" fill="#fff" stroke="#606060" stroke-width="1.2"/>
<circle cx="114.02" cy="264.93" r="0.8" fill="#fff"/>
<defs><filter id="sh" x="-40%" y="-20%" width="220%" height="150%"><feGaussianBlur in="SourceAlpha" stdDeviation="0.9"/><feOffset dx="2.2" dy="1.6"/><feComponentTransfer><feFuncA type="linear" slope="0.42"/></feComponentTransfer><feMerge><feMergeNode/><feMergeNode in="SourceGraphic"/></feMerge></filter></defs>
<circle cx="52.4" cy="222.2" r="14.4" fill="#8b0000"/>
<circle cx="128.4" cy="218.7" r="14.5" fill="#8b0000"/>
<circle cx="941.3" cy="372.5" r="14.8" fill="#8b0000"/>
<circle cx="985.3" cy="410.5" r="14.8" fill="#8b0000"/>
<g filter="url(#sh)">
<path d="M55.23 209.25 L51.89 193.87 L55.24 195.48 L49.2 184.4 L47.58 196.91 L50.12 194.2 L52.57 209.75 Z" fill="#8b0000"/>
<path d="M130.49 205.11 L126.66 193.83 L130.17 195.09 L123 184.7 L122.69 197.31 L124.94 194.35 L127.91 205.89 Z" fill="#8b0000"/>
</g>
<text x="51.6" y="228.08" font-size="16.6" fill="#fff" stroke="#fff" stroke-width="0.7" text-anchor="middle">1</text>
<text x="128.2" y="224.1" font-size="16.4" fill="#fff" stroke="#fff" stroke-width="0.7" text-anchor="middle">4</text>
<text x="941.3" y="378.44" font-size="16.5" fill="#fff" stroke="#fff" stroke-width="0" text-anchor="middle">2</text>
<text x="985.3" y="416.44" font-size="16.5" fill="#fff" stroke="#fff" stroke-width="0" text-anchor="middle">3</text>
</svg>
</body></html>
